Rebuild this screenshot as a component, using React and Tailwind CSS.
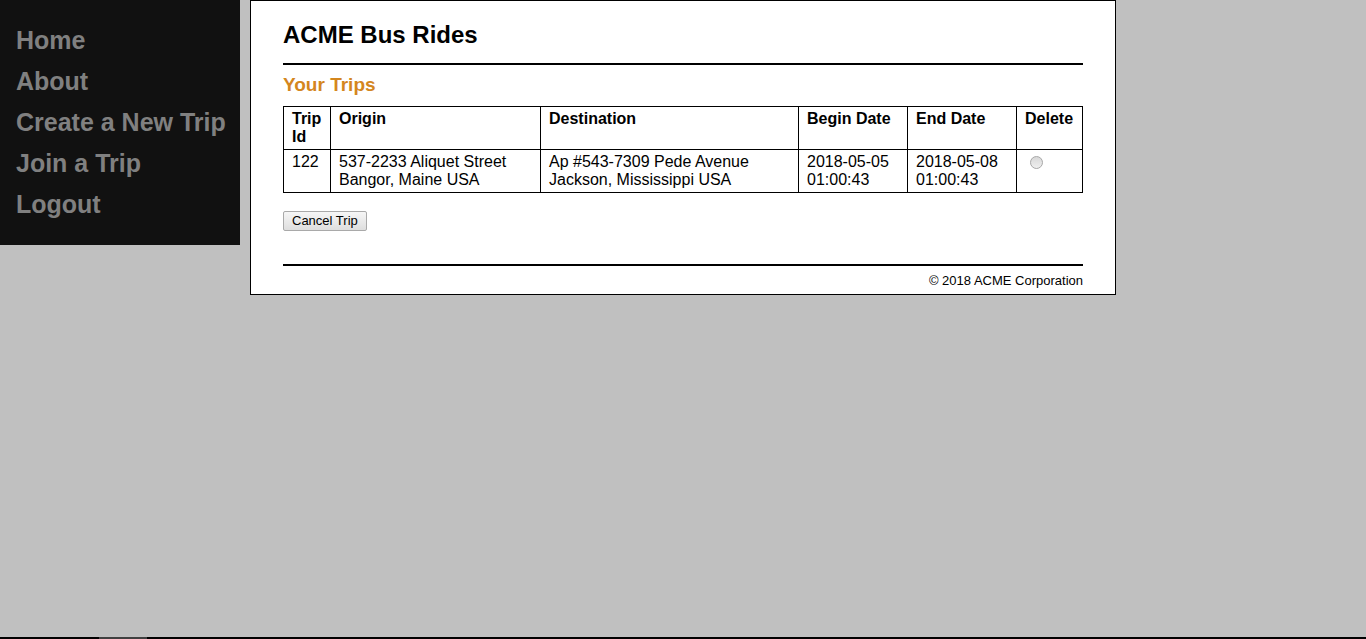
import React from 'react';

const navLinks = ['Home', 'About', 'Create a New Trip', 'Join a Trip', 'Logout'];

const trips = [
  {
    id: 122,
    origin: ['537-2233 Aliquet Street', 'Bangor, Maine USA'],
    destination: ['Ap #543-7309 Pede Avenue', 'Jackson, Mississippi USA'],
    begin: ['2018-05-05', '01:00:43'],
    end: ['2018-05-08', '01:00:43'],
  },
];

const cell = 'border border-black px-2 pt-[3px] pb-[3px] align-top text-left';

const App = () => {
  return (
    <div className="h-screen flex flex-col bg-[#c0c0c0] text-black font-['Liberation_Sans',Arial,sans-serif]">
      <div className="flex-1 flex items-start gap-[10px]">
        <nav className="w-[240px] shrink-0 bg-[#111111] py-[20px] pl-4">
          {navLinks.map((link) => (
            <a key={link} href="#" className="block whitespace-nowrap text-[25px] leading-[41px] font-bold text-[#808080]">
              {link}
            </a>
          ))}
        </nav>

        <main className="w-[866px] bg-white border border-black px-8 pb-[6px]">
          <h2 className="pt-[20px] text-[24px] leading-[28px] font-bold">ACME Bus Rides</h2>
          <hr className="mt-[14px] border-0 border-t-2 border-black" />
          <h3 className="mt-[9px] text-[19px] leading-[22px] font-bold text-[#d4861e]">Your Trips</h3>

          <table className="mt-[10px] w-full border-collapse text-[16px] leading-[18px]">
            <thead>
              <tr>
                <th className={cell + ' w-[47px]'}>Trip Id</th>
                <th className={cell + ' w-[210px]'}>Origin</th>
                <th className={cell + ' w-[258px]'}>Destination</th>
                <th className={cell + ' w-[109px]'}>Begin Date</th>
                <th className={cell + ' w-[109px]'}>End Date</th>
                <th className={cell}>Delete</th>
              </tr>
            </thead>
            <tbody>
              {trips.map((trip) => (
                <tr key={trip.id}>
                  <td className={cell}>{trip.id}</td>
                  <td className={cell}>
                    {trip.origin[0]}
                    <br />
                    {trip.origin[1]}
                  </td>
                  <td className={cell}>
                    {trip.destination[0]}
                    <br />
                    {trip.destination[1]}
                  </td>
                  <td className={cell}>
                    {trip.begin[0]}
                    <br />
                    {trip.begin[1]}
                  </td>
                  <td className={cell}>
                    {trip.end[0]}
                    <br />
                    {trip.end[1]}
                  </td>
                  <td className={cell}>
                    <input
                      type="radio"
                      name="delete"
                      value={trip.id}
                      className="appearance-none block ml-[5px] mt-[3px] w-[13px] h-[13px] rounded-full border border-[#a8a8a8] bg-gradient-to-b from-[#d8d8d8] to-[#efefef]"
                    />
                  </td>
                </tr>
              ))}
            </tbody>
          </table>

          <button className="mt-[18px] h-[20px] px-2 text-[13px] leading-[18px] border border-[#a9a9a9] rounded-[2px] bg-gradient-to-b from-[#f6f6f6] to-[#dedede]">
            Cancel Trip
          </button>

          <hr className="mt-[32px] border-0 border-t-2 border-black" />
          <p className="mt-[7px] text-right text-[13px] leading-[15px]">© 2018 ACME Corporation</p>
        </main>
      </div>
      <div className="h-[2px] bg-black">
        <div className="ml-[99px] w-[48px] h-full bg-[#404040]" />
      </div>
    </div>
  );
};

export default App;
